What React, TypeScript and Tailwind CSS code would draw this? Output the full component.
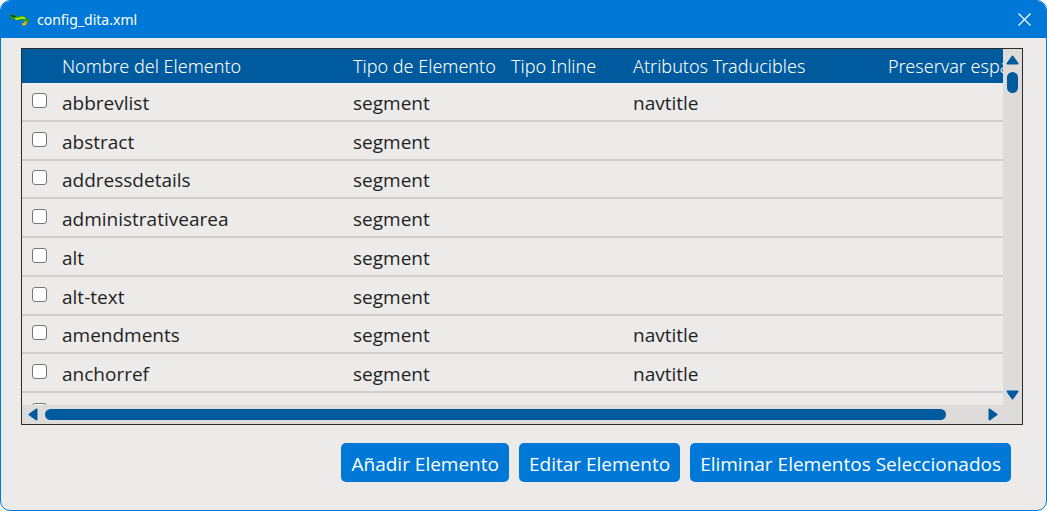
import React, { useState } from 'react';

const columns = [
  { name: 'Nombre del Elemento', width: 'w-[291px]' },
  { name: 'Tipo de Elemento', width: 'w-[158px]' },
  { name: 'Tipo Inline', width: 'w-[122px]' },
  { name: 'Atributos Traducibles', width: 'w-[255px]' },
  { name: 'Preservar espacios', width: 'w-[161px]' },
];

const elements = [
  { name: 'abbrevlist', type: 'segment', attributes: 'navtitle' },
  { name: 'abstract', type: 'segment', attributes: '' },
  { name: 'addressdetails', type: 'segment', attributes: '' },
  { name: 'administrativearea', type: 'segment', attributes: '' },
  { name: 'alt', type: 'segment', attributes: '' },
  { name: 'alt-text', type: 'segment', attributes: '' },
  { name: 'amendments', type: 'segment', attributes: 'navtitle' },
  { name: 'anchorref', type: 'segment', attributes: 'navtitle' },
  { name: 'annotation', type: 'segment', attributes: '' },
];

const actions = ['Añadir Elemento', 'Editar Elemento', 'Eliminar Elementos Seleccionados'];

const cellClass = 'border-b-2 border-[#d0cfce] px-[5px] pt-[3px]';

const LizardIcon = () => (
  <svg width="21" height="12" viewBox="0 0 21 12" aria-hidden="true">
    <path d="M1 .5 L4 .5 L7 2 L10 2.500 L13 1.800 L17 3 L18.500 5 L21 6.500 L19 8.500 L17 8 L15 6.500 L12 6 L9 6.500 L6 5.500 L3 4.800 L1 3.500 Z" fill="#2f9a10" />
    <path d="M1.500 1.500 L4.500 2 L7 3.500" stroke="#0d4a0a" strokeWidth="1.500" fill="none" />
    <path d="M6 4.500 L9 4.800 L13 3.500 L16 4.500" stroke="#b4ec1c" strokeWidth="1.800" fill="none" />
    <path d="M17 7.500 L16 10 L13 10.500" stroke="#d9b511" strokeWidth="2.600" fill="none" />
  </svg>
);

const Arrow = ({ label, path }: { label: string; path: string }) => (
  <button type="button" aria-label={label} className="flex shrink-0 items-center justify-center">
    <svg width="13" height="13" viewBox="0 0 13 13" fill="#005a9e" stroke="#005a9e" strokeWidth="2" strokeLinejoin="round">
      <path d={path} />
    </svg>
  </button>
);

const App = () => {
  const [selected, setSelected] = useState<string[]>([]);

  const toggle = (name: string) => {
    setSelected(selected.includes(name) ? selected.filter((item) => item !== name) : [...selected, name]);
  };

  return (
    <div className="flex h-screen flex-col overflow-hidden rounded-[10px] border border-[#0078d7] bg-[#ecebe9] font-['Open_Sans','Noto_Sans',sans-serif] text-[#1f1f1f]">
      {/* Title Bar */}
      <header className="flex h-[37px] shrink-0 items-center justify-between bg-[#0078d7] pr-[15px] pl-2 font-['Noto_Sans',sans-serif] text-white">
        <div className="flex items-center gap-[7px]">
          <LizardIcon />
          <h1 className="text-sm">config_dita.xml</h1>
        </div>
        <button type="button" aria-label="Cerrar">
          <svg width="13" height="13" viewBox="0 0 13 13" stroke="currentColor" strokeWidth="1.2">
            <path d="M.5 .5 L12.500 12.500 M12.500 .5 L.5 12.500" />
          </svg>
        </button>
      </header>

      {/* Elements Table */}
      <main className="mt-[10px] mr-[23px] ml-5 grid min-h-0 flex-1 grid-cols-[minmax(0,1fr)_19px] grid-rows-[minmax(0,1fr)_19px] border border-[#2b2b2b] bg-[#dddcdb]">
        <div className="overflow-hidden bg-[#ecebe9]">
          <table className="h-[383px] w-[1022px] table-fixed border-separate border-spacing-0 text-left text-[19px] leading-6 whitespace-nowrap">
            <thead className="font-['Noto_Sans',sans-serif] text-[18px]">
              <tr className="h-[34px] bg-[#005a9e] text-white">
                <th className="w-[35px]" />
                {columns.map((column) => (
                  <th key={column.name} className={`px-[5px] font-light ${column.width}`}>
                    {column.name}
                  </th>
                ))}
              </tr>
            </thead>
            <tbody>
              {elements.map((element) => (
                <tr key={element.name}>
                  <td className="border-b-2 border-[#d0cfce] pb-[2px] pl-[10px]">
                    <input
                      type="checkbox"
                      aria-label={element.name}
                      checked={selected.includes(element.name)}
                      onChange={() => toggle(element.name)}
                      className="block size-[15px] appearance-none rounded-[3px] border border-[#767676] bg-white checked:bg-[#0078d7]"
                    />
                  </td>
                  <td className={cellClass}>{element.name}</td>
                  <td className={cellClass}>{element.type}</td>
                  <td className={cellClass} />
                  <td className={cellClass}>{element.attributes}</td>
                  <td className={cellClass} />
                </tr>
              ))}
            </tbody>
          </table>
        </div>

        {/* Vertical Scrollbar */}
        <div className="flex flex-col items-center justify-between py-1">
          <div className="flex flex-col items-center gap-[6px]">
            <Arrow label="Subir" path="M1.500 10.500 L6.500 3.500 L11.500 10.500 Z" />
            <div className="h-[21px] w-[11px] rounded-full bg-[#005a9e]" />
          </div>
          <Arrow label="Bajar" path="M1.500 3.500 L6.500 10.500 L11.500 3.500 Z" />
        </div>

        {/* Horizontal Scrollbar */}
        <div className="flex items-center gap-[6px] px-1">
          <Arrow label="Izquierda" path="M10.500 1.500 L3.500 6.500 L10.500 11.500 Z" />
          <div className="min-w-0 flex-1">
            <div className="h-[11px] w-[96.4%] rounded-full bg-[#005a9e]" />
          </div>
          <Arrow label="Derecha" path="M3.500 1.500 L10.500 6.500 L3.500 11.500 Z" />
        </div>
      </main>

      {/* Actions */}
      <footer className="flex shrink-0 justify-end gap-[10px] pt-[18px] pr-[35px] pb-7">
        {actions.map((action) => (
          <button key={action} type="button" className="h-[39px] rounded-[5px] bg-[#0078d7] px-[10px] pt-[3px] text-[19px] text-white">
            {action}
          </button>
        ))}
      </footer>
    </div>
  );
};

export default App;
